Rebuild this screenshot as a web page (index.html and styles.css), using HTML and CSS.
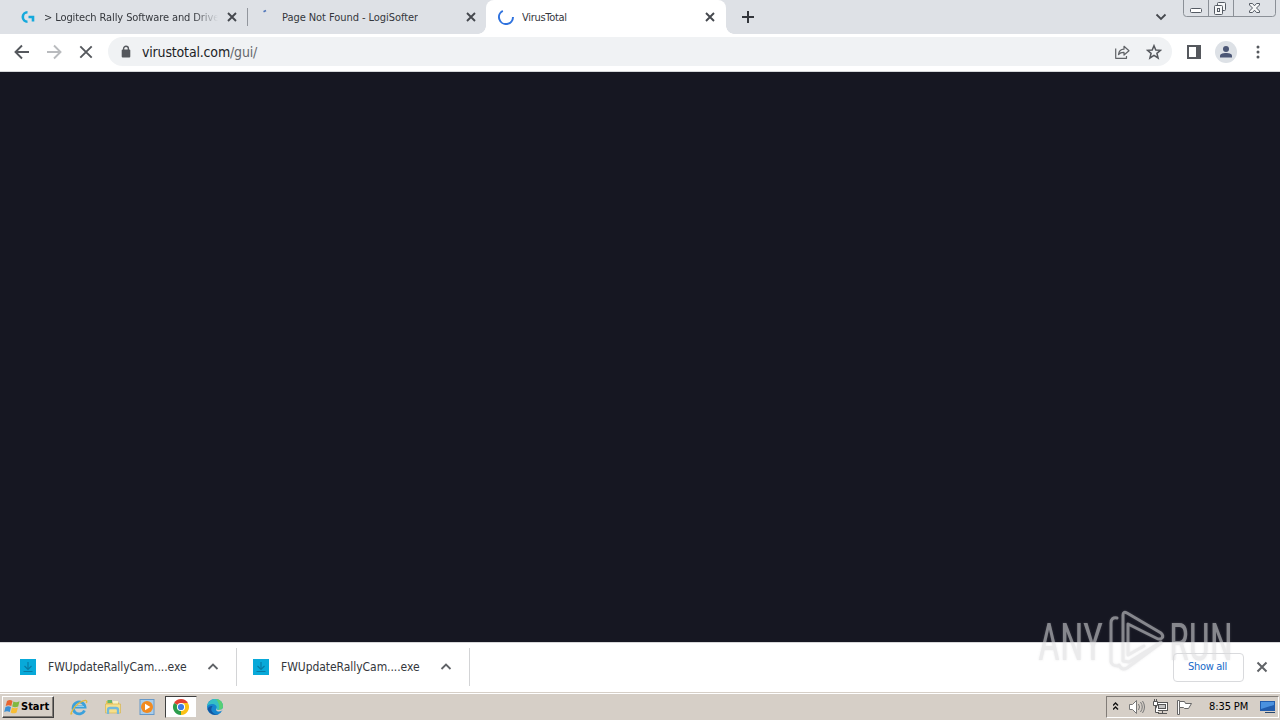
FILE: index.html
```
<!DOCTYPE html>
<html lang="en">
<head>
  <meta charset="UTF-8">
  <meta name="viewport" content="width=device-width, initial-scale=1.0">
  <title>VirusTotal</title>
  <link rel="stylesheet" href="styles.css">
</head>
<body>

  <div class="desktop">
    <!-- tabs -->
    <div class="tab-strip">
      <div class="tab tab-first">
        <svg class="favicon" width="16" height="16" viewBox="0 0 16 16" fill="none" stroke="#14a9dc" stroke-width="2.6">
          <path d="M7.5 3.3A4.7 4.7 0 1 0 7.5 12.7"/>
          <path d="M8.5 8H13V12.5"/>
        </svg>
        <span class="tab-title title-logitech">&gt; Logitech Rally Software and Drive</span>
        <svg class="tab-close" width="10" height="10" viewBox="0 0 10 10"><path d="M1 1L9 9M9 1L1 9"/></svg>
      </div>
      <div class="tab tab-second">
        <svg class="favicon" width="16" height="16" viewBox="0 0 16 16"><path d="M4.5 2.7L7 1.5" stroke="#5076ba" stroke-width="1.8"/></svg>
        <span class="tab-title title-missing">Page Not Found - LogiSofter</span>
        <svg class="tab-close" width="10" height="10" viewBox="0 0 10 10"><path d="M1 1L9 9M9 1L1 9"/></svg>
      </div>
      <div class="tab tab-active">
        <svg class="favicon" width="16" height="16" viewBox="0 0 16 16"><path d="M4.8 1.8A7 7 0 1 0 15 8" fill="none" stroke="#2f72de" stroke-width="2"/></svg>
        <span class="tab-title title-virus">VirusTotal</span>
        <svg class="tab-close" width="10" height="10" viewBox="0 0 10 10"><path d="M1 1L9 9M9 1L1 9"/></svg>
      </div>
      <svg class="new-tab" width="12" height="12" viewBox="0 0 12 12"><path d="M6 0V12M0 6H12" stroke="#33363c" stroke-width="2"/></svg>
      <svg class="tab-search" width="12" height="8" viewBox="0 0 12 8"><path d="M1.5 1.5L6 6L10.5 1.5" fill="none" stroke="#45484e" stroke-width="1.8"/></svg>
      <svg class="window-buttons" width="94" height="18" viewBox="0 0 94 18" fill="none">
        <path d="M.5 0V13.5Q.5 16.5 3.5 16.5H89.5Q92.5 16.5 92.5 13.5V0M25.5 0V16M50.5 0V16" stroke="#8b9097"/>
        <rect x="7.5" y="8.5" width="11" height="4" rx="1" fill="#fff" stroke="#555b64"/>
        <g fill="#f6f7f8" stroke="#555b64">
          <rect x="34.5" y="2.5" width="8" height="8" rx="1"/>
          <rect x="31.5" y="5.5" width="8" height="9" rx="1"/>
          <rect x="34.5" y="8.5" width="2" height="3"/>
          <path d="M66.5 3.5H69.5L71.5 5.8L73.5 3.5H76.5V5L73.5 8L76.5 11V12.5H73.5L71.5 10.2L69.5 12.5H66.5V11L69.5 8L66.5 5Z"/>
        </g>
      </svg>
    </div>

    <!-- toolbar -->
    <div class="toolbar">
      <svg class="nav-icon" width="16" height="16" viewBox="0 0 16 16"><path d="M15 8H2M8 1.5L1.5 8L8 14.5" fill="none" stroke="#55585d" stroke-width="1.9"/></svg>
      <svg class="nav-icon" width="16" height="16" viewBox="0 0 16 16"><path d="M1 8H14M8 1.5L14.5 8L8 14.5" fill="none" stroke="#b9bbbe" stroke-width="1.9"/></svg>
      <svg class="nav-icon" width="16" height="16" viewBox="0 0 16 16"><path d="M2.3 2.3L13.7 13.7M13.7 2.3L2.3 13.7" stroke="#55585d" stroke-width="1.9"/></svg>
      <div class="omnibox">
        <svg width="10" height="13" viewBox="0 0 10 13"><rect x=".7" y="4.6" width="8.6" height="8" rx="1" fill="#55585d"/><path d="M2.6 5.6V3.6A2.4 2.4 0 0 1 7.4 3.6V5.6" fill="none" stroke="#55585d" stroke-width="1.4"/></svg>
        <span class="url">virustotal.com<span class="url-path">/gui/</span></span>
        <svg class="share" width="16" height="16" viewBox="0 0 16 16" fill="none" stroke="#606367" stroke-width="1.2" stroke-linejoin="round"><path d="M1.7 4.5V14.3H12.5V12"/><path d="M4.5 10.5C5 7 7 5.3 10 5.2V2.3L15 6.7L10 11V8.4C7.5 8.3 5.8 9 4.5 10.5Z"/></svg>
        <svg class="star" width="16" height="16" viewBox="0 0 16 16"><path d="M8 1.7L9.8 6L14.5 6.3L10.9 9.3L12.1 14L8 11.4L3.9 14L5.1 9.3L1.5 6.3L6.2 6Z" fill="none" stroke="#55585d" stroke-width="1.5"/></svg>
      </div>
      <svg class="side-panel" width="14" height="14" viewBox="0 0 14 14"><rect x="1" y="1" width="12" height="12" fill="#fff" stroke="#55585d" stroke-width="2"/><path d="M9 1H13V13H9Z" fill="#55585d"/></svg>
      <svg class="profile" width="22" height="22" viewBox="0 0 22 22"><circle cx="11" cy="11" r="11" fill="#dde1e6"/><circle cx="11" cy="7.9" r="3" fill="#4b5675"/><path d="M5 16.5V15C5 12.7 8 12 11 12S17 12.7 17 15V16.5Z" fill="#4b5675"/></svg>
      <svg class="menu-dots" width="4" height="14" viewBox="0 0 4 14" fill="#55585d"><circle cx="2" cy="2" r="1.5"/><circle cx="2" cy="7" r="1.5"/><circle cx="2" cy="12" r="1.5"/></svg>
    </div>

    <div class="page"></div>

    <!-- downloads -->
    <div class="downloads">
      <div class="download download-first">
        <svg width="16" height="16" viewBox="0 0 16 16"><path d="M0 0H16V16H0Z" fill="#08a9d9"/><path d="M8 3V10M4.5 7L8 10.5L11.5 7M3.5 12.5H12.5" fill="none" stroke="#087ba5" stroke-width="1.2"/></svg>
        <span class="file-name">FWUpdateRallyCam....exe</span>
        <svg class="chevron" width="12" height="8" viewBox="0 0 12 8"><path d="M1.5 6L6 1.5L10.5 6" fill="none" stroke="#606367" stroke-width="1.8"/></svg>
      </div>
      <div class="download">
        <svg width="16" height="16" viewBox="0 0 16 16"><path d="M0 0H16V16H0Z" fill="#08a9d9"/><path d="M8 3V10M4.5 7L8 10.5L11.5 7M3.5 12.5H12.5" fill="none" stroke="#087ba5" stroke-width="1.2"/></svg>
        <span class="file-name">FWUpdateRallyCam....exe</span>
        <svg class="chevron" width="12" height="8" viewBox="0 0 12 8"><path d="M1.5 6L6 1.5L10.5 6" fill="none" stroke="#606367" stroke-width="1.8"/></svg>
      </div>
      <button class="show-all">Show all</button>
      <svg class="close-bar" width="12" height="12" viewBox="0 0 12 12"><path d="M1.5 1.5L10.5 10.5M10.5 1.5L1.5 10.5" stroke="#606367" stroke-width="2"/></svg>
    </div>

    <!-- taskbar -->
    <div class="taskbar">
      <div class="start">
        <svg width="17" height="16" viewBox="0 0 17 16">
          <path d="M3 2Q6 0 8.5 2L7.3 7Q4.5 5.3 1.7 7Z" fill="#e7642f"/>
          <path d="M9.4 2.4Q12 4 15.5 2.3L14.2 7.4Q11 9 8.2 7.4Z" fill="#80b840"/>
          <path d="M1.5 8Q4.3 6.4 7 8L5.8 13Q3 11.4 .2 13Z" fill="#3a8fd4"/>
          <path d="M8 8.4Q11 10 13.9 8.4L12.6 13.4Q9.5 15.2 6.7 13.4Z" fill="#f7bd35"/>
        </svg>
        <span>Start</span>
      </div>
      <svg class="task-icon" width="18" height="18" viewBox="0 0 18 18" fill="none">
        <path d="M14.5 12.5A6 6 0 1 1 15 9H5" stroke="#3ba1dc" stroke-width="2.8"/>
        <path d="M4.8 8.5H14" stroke="#8bd0f2" stroke-width="1"/>
        <path d="M2 15C-1 19 3 9 9 5S18 2 16.3 5" stroke="#e2ba3e" stroke-width="1.4"/>
      </svg>
      <svg class="task-icon" width="18" height="18" viewBox="0 0 18 18">
        <path d="M2 3H7L8.5 4.5H15V15H2Z" fill="#e9c75c"/>
        <path d="M3.5 2H8V5H3.5Z" fill="#68b568"/><path d="M9 3H14V6H9Z" fill="#f7f2c5"/>
        <path d="M1.5 6H16.5V15H1.5Z" fill="#f6df8a" stroke="#d5b552" stroke-width=".7"/>
        <path d="M4 16V12Q4 10 6 10H12Q14 10 14 12V16" fill="none" stroke="#72b9dc" stroke-width="2.3"/>
      </svg>
      <svg class="task-icon" width="18" height="18" viewBox="0 0 18 18">
        <rect x="2" y="1.5" width="14" height="15" fill="#a9cdea" stroke="#6699c9"/>
        <circle cx="9" cy="9" r="6" fill="#f18a20"/>
        <path d="M7 5.7L12.3 9L7 12.3Z" fill="#fff"/>
      </svg>
      <div class="task-active">
        <svg width="18" height="18" viewBox="0 0 18 18">
          <path d="M9 9L2.07 5A8 8 0 0 1 15.93 5Z" fill="#e34132"/>
          <path d="M9 9L15.93 5A8 8 0 0 1 9 17Z" fill="#fbc116"/>
          <path d="M9 9L9 17A8 8 0 0 1 2.07 5Z" fill="#2d9d4c"/>
          <path d="M9 5H15.93L12.5 11L9 17L9 9Z" fill="#fbc116"/>
          <circle cx="9" cy="9" r="4.1" fill="#fff"/><circle cx="9" cy="9" r="3.1" fill="#3d7ce5"/>
        </svg>
      </div>
      <svg class="task-icon" width="18" height="18" viewBox="0 0 18 18">
        <circle cx="9" cy="9" r="8" fill="#1685cf"/>
        <path d="M1 8.5C2 3 6 1 9 1C14 1 17 4.5 17 8.5C17 11 15 12 12.5 12C10 12 9.8 11 10.5 10C12 7 5 3.5 1 8.5Z" fill="#35bfc5"/>
        <path d="M10 1.1C14.5 1.5 17 4.5 17 8.5C17 11 15 12 12.5 12C14 9 13 5 10 1.1Z" fill="#57cf75"/>
        <path d="M6.5 8C3 13 8 17 12.5 16.2C9 17.8 3 16 1.5 11C2.5 8.5 4.5 7.5 6.5 8Z" fill="#14559f"/>
        <path d="M10.8 10C8.5 13 12.5 14.5 16.2 12.6L18 11V8C17 11 15 12 12.5 12C10.5 12 10.3 11 10.8 10Z" fill="#d6cfc7"/>
      </svg>

      <div class="tray">
        <svg class="tray-more" width="8" height="10" viewBox="0 0 8 10"><path d="M0 3.5L2.5 1L5 3.5M0 7.5L2.5 5L5 7.5" fill="none" stroke="#111" stroke-width="1.4"/></svg>
        <svg class="volume" width="18" height="16" viewBox="0 0 18 16" fill="none" stroke="#777"><path d="M.5 5.5H3.5L7.5 1.5V14.5L3.5 10.5H.5Z" fill="#fff"/><path d="M9.5 5Q11.5 8 9.5 11M11.5 3Q15 8 11.5 13M13.5 2Q17.5 8 13.5 14"/></svg>
        <svg class="network" width="17" height="16" viewBox="0 0 17 16" stroke="#555"><rect x="3.5" y="3.5" width="11" height="8" fill="#fff"/><rect x="5.5" y="5.5" width="7" height="4" fill="#c4c4c4"/><path d="M9.5 12V14M5 14.5H14" fill="none"/><path d="M.5 2.5H4.5V6.5H.5ZM1.5 0V2M3.5 0V2M2.5 7V13.5H6" fill="#fff"/></svg>
        <svg class="flag" width="17" height="16" viewBox="0 0 17 16" fill="#fff" stroke="#666"><path d="M.5 1.5H2.5V15.5H.5Z"/><path d="M2.5 2.5H7.5L8.5 4.5H14.5L11.5 9.5H7.5L6.5 8.5H2.5Z"/></svg>
        <span class="clock">8:35 PM</span>
        <svg class="show-desktop" width="16" height="14" viewBox="0 0 16 14"><path d="M0 1H15V11H0Z" fill="#215cad"/><path d="M1 2H14V5L1 9Z" fill="#4a91df"/><path d="M5 12.5H15" stroke="#26466e"/></svg>
      </div>
    </div>

    <svg class="watermark" width="200" height="70" viewBox="0 0 200 70">
      <text x="3" y="54" textLength="65" lengthAdjust="spacingAndGlyphs">ANY</text>
      <path class="watermark-mark" d="M82 12Q76 11 76 17V56Q77 60 83 60M88 55V9Q88 5 92 7L126 27Q129 30 127 32Q125 34 121 32L93 18V49L109 40M126 36L94 56L88 55M126 37L92 62Q87 65 84 59"/>
      <text x="134" y="54" textLength="64" lengthAdjust="spacingAndGlyphs">RUN</text>
    </svg>
  </div>

</body>
</html>
```
FILE: styles.css
```
* {
  box-sizing: border-box;
}

body {
  margin: 0;
  font-family: "DejaVu Sans Condensed", "DejaVu Sans", sans-serif;
  font-stretch: condensed;
  font-size: 11px;
  color: #34373c;
}

svg {
  display: block;
  flex: none;
}

.desktop {
  position: relative;
  display: flex;
  flex-direction: column;
  width: 1280px;
  height: 720px;
  overflow: hidden;
}

.tab-strip {
  display: flex;
  height: 34px;
  background-color: #dee1e6;
}

.tab {
  display: flex;
  align-items: center;
  height: 34px;
  padding-right: 11px;
}

.tab-first {
  width: 248px;
  padding-left: 20px;
  padding-right: 10px;
  border-right: 1px solid transparent;
  border-image: linear-gradient(transparent 24%, #92969d 24%, #92969d 76%, transparent 76%) 1;
}

.tab-second {
  width: 238px;
  padding-left: 11px;
  padding-right: 10px;
}

.tab-active {
  position: relative;
  width: 240px;
  padding-left: 12px;
  background-color: #fff;
  border-radius: 8px 8px 0 0;
}

/* curved feet of the selected tab */
.tab-active::before,
.tab-active::after {
  content: "";
  position: absolute;
  bottom: 0;
  width: 8px;
  height: 8px;
}

.tab-active::before {
  left: -8px;
  background: radial-gradient(circle at 0 0, transparent 7.5px, #fff 8px);
}

.tab-active::after {
  right: -8px;
  background: radial-gradient(circle at 100% 0, transparent 7.5px, #fff 8px);
}

.tab-title {
  margin-left: 8px;
  padding-top: 1px;
  white-space: nowrap;
  overflow: hidden;
  line-height: 16px;
}

.title-logitech {
  width: 174px;
  letter-spacing: -0.1px;
  -webkit-mask-image: linear-gradient(to right, #000 86%, transparent);
  mask-image: linear-gradient(to right, #000 86%, transparent);
}

.title-missing {
  margin-left: 7px;
  letter-spacing: -0.06px;
}

.title-virus {
  letter-spacing: -0.3px;
}

.tab-close {
  margin-left: auto;
}

.tab-close path {
  stroke: #45484e;
  stroke-width: 1.9;
}

.new-tab {
  margin: 11px 0 0 16px;
}

.tab-search {
  margin: 13px 16px 0 auto;
}

.window-buttons {
  margin-right: 3px;
}

.toolbar {
  display: flex;
  align-items: center;
  height: 38px;
  padding: 0 20px 2px 14px;
  background-color: #fff;
  border-bottom: 1px solid #d5d7da;
}

.nav-icon {
  margin-right: 16px;
}

.omnibox {
  display: flex;
  align-items: center;
  width: 1064px;
  height: 29px;
  margin-left: -2px;
  padding: 0 10px 0 13px;
  background-color: #f0f2f4;
  border-radius: 15px;
}

.url {
  margin-left: 11px;
  padding-top: 1px;
  font-size: 14px;
  letter-spacing: -0.17px;
  color: #202226;
}

.url-path {
  color: #64676c;
}

.share {
  margin-left: auto;
}

.star {
  margin-left: 16px;
}

.side-panel {
  margin-left: 15px;
}

.profile {
  margin-left: 14px;
}

.menu-dots {
  margin-left: auto;
}

.page {
  height: 570px;
  background-color: #161722;
}

.downloads {
  display: flex;
  align-items: center;
  height: 50px;
  padding-bottom: 1px;
  background-color: #fff;
  border-top: 1px solid #d7d7d9;
}

.download {
  display: flex;
  align-items: center;
  width: 233px;
  height: 38px;
  padding-left: 16px;
  border-right: 1px solid #d3d4d6;
}

.download-first {
  width: 237px;
  padding-left: 20px;
}

.file-name {
  width: 144px;
  margin-left: 12px;
  font-size: 12px;
  letter-spacing: -0.05px;
  white-space: nowrap;
}

.chevron {
  margin-left: 15px;
}

.show-all {
  width: 71px;
  height: 29px;
  margin-left: auto;
  padding: 0 2px 2px 0;
  font-family: inherit;
  font-stretch: inherit;
  font-size: 11px;
  letter-spacing: -0.3px;
  color: #1769c8;
  background-color: #fff;
  border: 1px solid #d9dadd;
  border-radius: 4px;
}

.close-bar {
  margin: 0 12px;
}

.taskbar {
  display: flex;
  align-items: center;
  height: 28px;
  padding: 1px 1px 1px 2px;
  background-color: #d6cfc7;
  border-top: 1px solid #d6cfc7;
  box-shadow: inset 0 1px #fff;
}

.start {
  display: flex;
  align-items: center;
  width: 52px;
  height: 22px;
  padding-left: 1px;
  font-size: 11px;
  font-weight: bold;
  color: #000;
  border: 1px solid;
  border-color: #fff #404040 #404040 #fff;
  box-shadow: inset -1px -1px #817c77;
}

.start span {
  letter-spacing: 0;
}

.task-icon {
  margin-left: 16px;
}

.task-active {
  display: flex;
  align-items: center;
  justify-content: center;
  width: 32px;
  height: 22px;
  margin-left: 9px;
  background-color: #fff;
  border: 1px solid;
  border-color: #404040 #d6cfc7 #d6cfc7 #404040;
}

.task-active + .task-icon {
  margin-left: 9px;
}

.tray {
  display: flex;
  align-items: center;
  width: 173px;
  height: 22px;
  margin-left: auto;
  padding-left: 6px;
  color: #000;
  border: 1px solid;
  border-color: #817c77 #fff #fff #817c77;
}

.volume {
  margin-left: 8px;
}

.network {
  margin-left: 6px;
}

.flag {
  margin-left: 7px;
}

.clock {
  width: 41px;
  margin-left: 15px;
  white-space: nowrap;
  letter-spacing: -0.1px;
}

.show-desktop {
  margin-left: 10px;
}

.watermark {
  position: absolute;
  left: 1035px;
  top: 606px;
  opacity: 0.57;
  filter: drop-shadow(0 0 1px rgba(170, 170, 175, 0.4));
}

.watermark text {
  font-family: Roboto, sans-serif;
  font-size: 52px;
  fill: #dcdcde;
}

.watermark-mark {
  fill: none;
  stroke: #dcdcde;
  stroke-width: 3;
  stroke-linecap: round;
  stroke-linejoin: round;
}
```
